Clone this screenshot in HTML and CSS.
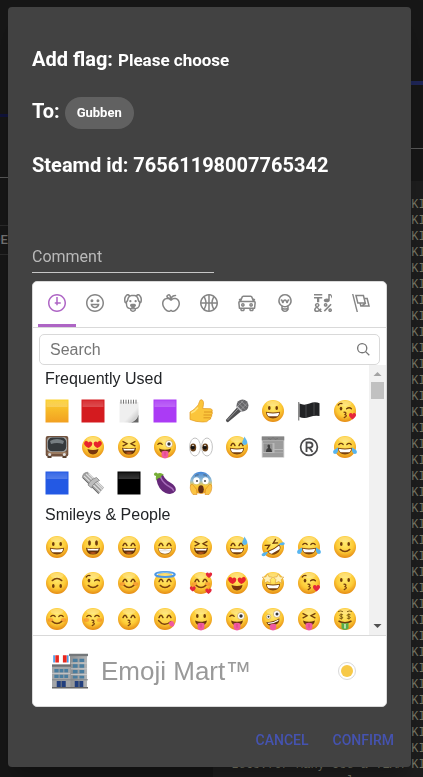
FILE: index.html
```html
<!DOCTYPE html>
<html lang="en">
<head>
<meta charset="utf-8">
<meta name="viewport" content="width=device-width, initial-scale=1">
<title>Add flag</title>
<link rel="stylesheet" href="styles.css">
</head>
<body>
<svg class="defs" aria-hidden="true">
  <defs>
    <radialGradient id="g-face" cx=".5" cy=".36" r=".64"><stop offset="0" stop-color="#ffe96b"/><stop offset=".6" stop-color="#fdcb36"/><stop offset="1" stop-color="#e58b14"/></radialGradient>
    <linearGradient id="g-scream" x1="0" y1="0" x2="0" y2="1"><stop offset="0" stop-color="#3f83d8"/><stop offset=".4" stop-color="#9ac0d0"/><stop offset=".65" stop-color="#fdcb36"/><stop offset="1" stop-color="#ee9e22"/></linearGradient>
    <linearGradient id="g-yellow" x1="0" y1="0" x2="0" y2="1"><stop offset="0" stop-color="#fbd12f"/><stop offset="1" stop-color="#f2a021"/></linearGradient>
    <linearGradient id="g-note" x1="0" y1="0" x2="1" y2="1"><stop offset=".6" stop-color="#efefef"/><stop offset="1" stop-color="#b5b5b5"/></linearGradient>
    <linearGradient id="g-shine" x1="0" y1="0" x2="0" y2="1"><stop offset="0" stop-color="#fff" stop-opacity=".1"/><stop offset="1" stop-color="#fff" stop-opacity=".22"/></linearGradient>
    <linearGradient id="g-wall" x1="0" y1="0" x2="1" y2="0"><stop offset="0" stop-color="#8d8f91"/><stop offset="1" stop-color="#b3b5b6"/></linearGradient>
  </defs>

  <!-- face parts -->
  <symbol id="f" viewBox="0 0 24 24"><circle cx="12" cy="12" r="11" fill="url(#g-face)"/><ellipse cx="12" cy="4.6" rx="6.5" ry="2.8" fill="#fff" opacity=".22"/></symbol>
  <symbol id="e-dot" viewBox="0 0 24 24"><g fill="#6e3b0c"><ellipse cx="8.3" cy="9" rx="1.3" ry="1.9"/><ellipse cx="15.7" cy="9" rx="1.3" ry="1.9"/></g></symbol>
  <symbol id="e-arc" viewBox="0 0 24 24"><path d="M6 10.6Q8 6 10 10.6M14 10.6Q16 6 18 10.6" fill="none" stroke="#6e3b0c" stroke-width="1.4" stroke-linecap="round"/></symbol>
  <symbol id="e-shut" viewBox="0 0 24 24"><path d="M5.8 9.5Q8 7.2 10.2 9.5M13.8 9.5Q16 7.2 18.2 9.5" fill="none" stroke="#6e3b0c" stroke-width="1.2" stroke-linecap="round"/></symbol>
  <symbol id="e-squint" viewBox="0 0 24 24"><path d="M6 6.6l4 2.2-4 2M18 6.6l-4 2.2 4 2" fill="none" stroke="#6e3b0c" stroke-width="1.3" stroke-linecap="round"/></symbol>
  <symbol id="e-wink" viewBox="0 0 24 24"><ellipse cx="8" cy="9.6" rx="1.3" ry="1.9" fill="#6e3b0c"/><path d="M13.6 9.8Q16.3 7.6 18.4 9.8M5.2 6Q6.8 4 9 4.6" fill="none" stroke="#6e3b0c" stroke-width="1.3" stroke-linecap="round"/></symbol>
  <symbol id="e-heart" viewBox="0 0 24 24"><g fill="#e8232c"><path d="M7.6 13C3.3 11.3 2.1 8 4 6.5c1.5-1.1 3 0 3.4 1 .8-1 2.600-1.500 3.600 0 1.100 2-1 4.500-3.400 5.500z"/><path d="M16.400 13c4.300-1.700 5.500-5 3.600-6.500-1.500-1.100-3 0-3.400 1-.8-1-2.600-1.500-3.600 0-1.100 2 1 4.500 3.400 5.500z"/></g></symbol>
  <symbol id="m-teeth" viewBox="0 0 24 24"><path d="M4.800 12.800Q12 14.400 19.200 12.800 18.500 19.400 12 19.400T4.800 12.800z" fill="#7a410e"/><path d="M5.800 13.800Q12 15 18.200 13.800 17.600 17 16.500 17.200H7.500Q6.200 16.600 5.800 13.800z" fill="#fff"/></symbol>
  <symbol id="m-grin" viewBox="0 0 24 24"><path d="M4.800 12.800Q12 14.200 19.200 12.800 18.500 19.600 12 19.600T4.800 12.800z" fill="#a3671c"/><path d="M5.600 13.600Q12 14.900 18.400 13.600 17.600 18.800 12 18.800T5.600 13.600z" fill="#fff"/><path d="M6 15.800h12" stroke="#c9b8a0" stroke-width=".5"/></symbol>
  <symbol id="m-open" viewBox="0 0 24 24"><path d="M5 12.700Q12 14.200 19 12.700 18.500 19.600 12 19.600T5 12.700z" fill="#67340a"/><path d="M6.200 13.500Q12 14.700 17.800 13.500L17 15.500H7z" fill="#fff"/><path d="M8.400 18Q12 15.800 15.600 18 12 20 8.400 18z" fill="#b5541b"/></symbol>
  <symbol id="m-smile" viewBox="0 0 24 24"><path d="M7.200 14.400Q12 18.600 16.800 14.400" fill="none" stroke="#7a410e" stroke-width="1.400" stroke-linecap="round"/></symbol>
  <symbol id="m-kiss" viewBox="0 0 24 24"><path d="M11 13.200q3.400.2 1 2.400 3.200 1.200-.8 3" fill="none" stroke="#7a410e" stroke-width="1.200" stroke-linecap="round"/></symbol>
  <symbol id="m-tongue" viewBox="0 0 24 24"><path d="M6 13.500Q12 16 18 13.500 17.200 18.500 12 18.500T6 13.500z" fill="#67340a"/><path d="M8.600 16.500q3.400-1.600 6.800 0v4.200q-.8 2.800-3.400 2.800t-3.400-2.800z" fill="#f05aa0"/><path d="M12 16.800v4" stroke="#d13b82" stroke-width=".7"/></symbol>
  <symbol id="blush" viewBox="0 0 24 24"><g fill="#f4662a" opacity=".4"><ellipse cx="5.500" cy="13" rx="2.800" ry="1.900"/><ellipse cx="18.500" cy="13" rx="2.800" ry="1.900"/></g></symbol>
  <symbol id="heart" viewBox="0 0 24 24"><path d="M12 21C3 15 1 10 3.500 6 6 3 10.500 4 12 8c1.500-4 6-5 8.500-2C23 10 21 15 12 21z" fill="#e5273b"/></symbol>
  <symbol id="square" viewBox="0 0 24 24"><path d="M.5.500h23v23H.5z"/><path d="M1.500 1.500h21v6.500h-21z" fill="url(#g-shine)"/></symbol>

  <!-- smileys -->
  <symbol id="grinning" viewBox="0 0 24 24"><use href="#f"/><use href="#e-dot"/><use href="#m-teeth"/></symbol>
  <symbol id="smiley" viewBox="0 0 24 24"><use href="#f"/><g fill="#6e3b0c"><ellipse cx="8.500" cy="8" rx="1.400" ry="2.800"/><ellipse cx="15.500" cy="8" rx="1.400" ry="2.800"/></g><use href="#m-open"/></symbol>
  <symbol id="smile" viewBox="0 0 24 24"><use href="#f"/><use href="#e-arc"/><use href="#m-open"/></symbol>
  <symbol id="grin" viewBox="0 0 24 24"><use href="#f"/><use href="#e-arc"/><use href="#m-grin"/></symbol>
  <symbol id="laughing" viewBox="0 0 24 24"><use href="#f"/><use href="#e-squint"/><use href="#m-open"/></symbol>
  <symbol id="sweat" viewBox="0 0 24 24"><use href="#f"/><use href="#e-arc"/><use href="#m-teeth"/><path d="M19.500 1.500c1.200 2.500 3 4.300 2.800 6.300-.3 3-5 3-5.100 0 0-2 1.800-3.800 2.300-6.300z" fill="#5fb8ee"/></symbol>
  <symbol id="joy" viewBox="0 0 24 24"><use href="#f"/><use href="#e-shut"/><use href="#m-teeth"/><g fill="#57b5f0"><path d="M5 12.500c.5 3.500-.5 6.300-2.800 6.500-2.600 0-2.800-3.300-.4-4.500z"/><path d="M19 12.500c-.5 3.500.5 6.300 2.800 6.500 2.600 0 2.800-3.300.4-4.500z"/></g></symbol>
  <symbol id="rofl" viewBox="0 0 24 24"><use href="#f"/><g transform="rotate(-30 12 12)"><use href="#e-squint"/><use href="#m-teeth"/></g><g fill="#57b5f0"><path d="M7 17c-1.500 3.500-4 5-6 3.800-1.500-2 2-3.800 6-3.800z"/><path d="M17.500 9.500c3-2.500 5.500-2.800 6.200-1.200.2 2.200-3.200 2.600-6.200 1.200z"/></g></symbol>
  <symbol id="slight" viewBox="0 0 24 24"><use href="#f"/><use href="#e-dot"/><use href="#m-smile"/></symbol>
  <symbol id="upside" viewBox="0 0 24 24"><use href="#f"/><g transform="rotate(180 12 12)"><use href="#e-dot"/><use href="#m-smile"/></g></symbol>
  <symbol id="wink" viewBox="0 0 24 24"><use href="#f"/><use href="#e-wink"/><use href="#m-smile"/></symbol>
  <symbol id="blushing" viewBox="0 0 24 24"><use href="#f"/><use href="#blush"/><use href="#e-arc"/><use href="#m-smile"/></symbol>
  <symbol id="innocent" viewBox="0 0 24 24"><use href="#f"/><use href="#e-arc"/><use href="#m-smile"/><ellipse cx="12" cy="3.500" rx="9.800" ry="2.500" fill="none" stroke="#4b97e4" stroke-width="2"/><path d="M4 2.600Q12-.2 20 2.600" fill="none" stroke="#9fd0fa" stroke-width=".7"/></symbol>
  <symbol id="loving" viewBox="0 0 24 24"><use href="#f"/><use href="#blush"/><use href="#e-arc"/><use href="#m-smile"/><use href="#heart" x="16" y="0" width="8" height="8"/><use href="#heart" x="0" y="14" width="7.500" height="7.500"/><use href="#heart" x="15.500" y="16" width="8" height="8"/></symbol>
  <symbol id="heart-eyes" viewBox="0 0 24 24"><use href="#f"/><path d="M6.500 14Q12 16 17.500 14 17 19.400 12 19.400T6.500 14z" fill="#7a360c"/><use href="#e-heart"/></symbol>
  <symbol id="star" viewBox="0 0 24 24"><use href="#f"/><use href="#m-teeth"/><g fill="#fff0b5" stroke="#d99b33" stroke-width=".6"><path d="M6.500 2.800l1.500 3 3.500.4-2.400 2.500.6 3.500-3.200-1.600-3.300 1.600.6-3.500L1.200 6.200 5 5.800z"/><path d="M17.500 2.800l1.500 3 3.800.4-2.600 2.500.6 3.500-3.300-1.600-3.200 1.600.6-3.500-2.400-2.500 3.500-.4z"/></g></symbol>
  <symbol id="kiss-heart" viewBox="0 0 24 24"><use href="#f"/><use href="#e-wink"/><use href="#m-kiss"/><use href="#heart" x="15" y="12.500" width="9" height="9"/></symbol>
  <symbol id="kissing" viewBox="0 0 24 24"><use href="#f"/><use href="#e-dot"/><use href="#m-kiss"/></symbol>
  <symbol id="relaxed-face" viewBox="0 0 24 24"><use href="#f"/><use href="#blush"/><use href="#e-shut"/><use href="#m-smile"/></symbol>
  <symbol id="kiss-shut" viewBox="0 0 24 24"><use href="#f"/><use href="#blush"/><use href="#e-shut"/><use href="#m-kiss"/></symbol>
  <symbol id="kiss-arc" viewBox="0 0 24 24"><use href="#f"/><use href="#e-arc"/><use href="#m-kiss"/></symbol>
  <symbol id="yum" viewBox="0 0 24 24"><use href="#f"/><use href="#e-arc"/><path d="M5.500 13.500Q11 20.500 18 14.500" fill="none" stroke="#7a410e" stroke-width="1.400" stroke-linecap="round"/><path d="M15.500 16.300q3-3.600 5-1.300 1.700 3-.4 4.600-2.700.8-4.600-3.300z" fill="#f05aa0"/></symbol>
  <symbol id="tongue" viewBox="0 0 24 24"><use href="#f"/><use href="#e-dot"/><use href="#m-tongue"/></symbol>
  <symbol id="tongue-wink" viewBox="0 0 24 24"><use href="#f"/><path d="M4.800 9.400Q7 7.200 9.200 9.400" fill="none" stroke="#6e3b0c" stroke-width="1.300" stroke-linecap="round"/><circle cx="16" cy="9" r="3.600" fill="#fff" stroke="#b88a3a" stroke-width=".5"/><circle cx="16" cy="9" r="1.700" fill="#333"/><use href="#m-tongue"/></symbol>
  <symbol id="zany" viewBox="0 0 24 24"><use href="#f"/><circle cx="7.500" cy="9.800" r="2.300" fill="#fff" stroke="#b88a3a" stroke-width=".5"/><circle cx="7.500" cy="9.800" r="1" fill="#333"/><circle cx="15.800" cy="7" r="3.500" fill="#fff" stroke="#b88a3a" stroke-width=".5"/><circle cx="16" cy="7" r="1.500" fill="#333"/><g transform="rotate(-14 12 15)"><path d="M5.500 13.500Q12 15.500 19 13 18.500 18.500 12 18.500T5.500 13.500z" fill="#67340a"/><path d="M6.500 14.300Q12 16 18 13.900l-.6 1.500Q12 17 7 15.800z" fill="#fff"/></g><path d="M8.800 18q3.300-2 6.400-.5v3.500q-.8 2.500-3.200 2.500T8.800 21z" fill="#f05aa0"/></symbol>
  <symbol id="tongue-shut" viewBox="0 0 24 24"><use href="#f"/><use href="#e-squint"/><use href="#m-tongue"/></symbol>
  <symbol id="money" viewBox="0 0 24 24"><use href="#f"/><path d="M5 4.700q2.500-1.500 5 0M14 4.700q2.500-1.500 5 0M10 7.800q-3.400-1.300-3.400.4 0 1 1.700 1.300t1.500 1.500q-.5 1.200-3.400.2M8.300 6.500v6M17.500 7.800q-3.400-1.300-3.400.4 0 1 1.700 1.300t1.500 1.500q-.5 1.200-3.400.2M15.800 6.500v6" fill="none" stroke="#7a5a12" stroke-width=".9"/><path d="M5.500 14Q12 17.500 18.500 14" fill="none" stroke="#6e3b0c" stroke-width="1.500"/><path d="M8.500 15.800q3.500 1.200 7 0v5.800q-3.500 2.600-7 0z" fill="#58ad4a"/><path d="M12 17v4.500" stroke="#d3efc4" stroke-width="1.500"/></symbol>
  <symbol id="scream" viewBox="0 0 24 24"><circle cx="12" cy="11.800" r="11" fill="url(#g-scream)"/><path d="M6 5.200q1.500-1.700 3.600-1.300M18 5.200q-1.500-1.700-3.600-1.300" fill="none" stroke="#4b5d70" stroke-width=".9"/><ellipse cx="7.500" cy="9.700" rx="3.200" ry="3.500" fill="#fff"/><ellipse cx="16.500" cy="9.700" rx="3.200" ry="3.500" fill="#fff"/><circle cx="8" cy="10" r="1" fill="#444"/><circle cx="16" cy="10" r="1" fill="#444"/><ellipse cx="12" cy="18.300" rx="2.800" ry="4" fill="#633016"/><path d="M1.500 14q1.800-1.700 3 .5l3 4 .5 5H4Q.5 20 1.500 14zM22.500 14q-1.800-1.700-3 .5l-3 4-.5 5h4q3.500-3.500 2.500-9.500z" fill="#fbc443" stroke="#d98a1e" stroke-width=".6"/></symbol>

  <!-- objects -->
  <symbol id="notepad" viewBox="0 0 24 24"><path d="M2.500 3h19v14l-5 6.500h-14z" fill="url(#g-note)"/><path d="M14 23.500q5-1.500 7.500-7.500v7.500z" fill="#666"/><path d="M11 23.500q5-2 6-5 2.500.5 4.500-2.500-2 5.500-7.500 7.500z" fill="#d3d3d3"/><path d="M4 .7v4M6.500.7v4M9 .7v4M11.500.7v4M14 .7v4M16.500.7v4M19 .7v4" stroke="#777" stroke-width="1"/></symbol>
  <symbol id="thumb" viewBox="0 0 24 24"><path d="M1 13q3-1.500 5.500-4Q10 6 10.500 2.500 11 .3 12.800.8q2.700 1 1.200 7.200l-.3 1.500 7.800.2q2.500.5 1.600 3 .8 1.700-.4 3 .4 1.800-.8 2.700.2 2-2 2.400-1.500 2.700-6.400 2.200Q7 23 1 20.500z" fill="#fbc53b" stroke="#e29a21" stroke-width=".7"/><path d="M15 13h8M14.500 16h8M14.500 18.800h7" stroke="#d68c1c" stroke-width=".8"/><path d="M2 14q4-1.500 7-5.500" stroke="#ffe37b" stroke-width="1.500" fill="none"/></symbol>
  <symbol id="mic" viewBox="0 0 24 24"><path d="M.8 21L12.500 8l4 4L3 23.300q-1.500.4-2.200-2.300z" fill="#505052"/><path d="M2.500 21L13 10" stroke="#98989a" stroke-width="1"/><circle cx="17.500" cy="6.500" r="6" fill="#67676a"/><path d="M13.500 4l6.500 6.500M16 1.800l6 6M12.500 7.500L18.500 1.500M15.500 11l7-7" stroke="#a5a5a8" stroke-width=".7"/><path d="M11.500 7l5.500 5.500" stroke="#bababd" stroke-width="1.600"/></symbol>
  <symbol id="flag" viewBox="0 0 24 24"><path d="M1.700 3v18.500" stroke="#888" stroke-width="1.300"/><path d="M2.500 4.500Q7 6.800 12.500 4.500T22.500 4.300V17q-4.500-1-10 1t-10 0z" fill="#222325"/><path d="M9 6v12M17 4v12.500" stroke="#4b4c4e" stroke-width="1"/></symbol>
  <symbol id="tv" viewBox="0 0 24 24"><rect x=".7" y="1" width="22.600" height="20.500" rx="2" fill="#73533f"/><rect x="2" y="2" width="20" height="15" rx="4" fill="#a3a3a1"/><rect x="2.800" y="2.600" width="18.400" height="13.600" rx="4.500" fill="#35393c"/><path d="M5 6q7-3.800 14 0l-1 3q-6-2-12 0z" fill="#767d81"/><path d="M2.500 18h19" stroke="#a9896d" stroke-width="1.500"/><circle cx="4.700" cy="19.500" r="1.500" fill="#ddd"/><circle cx="19.300" cy="19.500" r="1.500" fill="#ddd"/><path d="M2.500 21h4v2h-4zM17.500 21h4v2h-4z" fill="#57402f"/></symbol>
  <symbol id="eyes" viewBox="0 0 24 24"><g fill="#fff" stroke="#b4b4b4" stroke-width=".8"><ellipse cx="6" cy="12" rx="5.400" ry="9"/><ellipse cx="18" cy="12" rx="5.400" ry="9"/></g><ellipse cx="4.200" cy="12.500" rx="3" ry="4" fill="#674019"/><ellipse cx="16.200" cy="12.500" rx="3" ry="4" fill="#674019"/><circle cx="3.800" cy="12.500" r="2" fill="#111"/><circle cx="15.800" cy="12.500" r="2" fill="#111"/><circle cx="4" cy="10.500" r=".8" fill="#fff"/><circle cx="16" cy="10.500" r=".8" fill="#fff"/></symbol>
  <symbol id="news" viewBox="0 0 24 24"><path d="M.8 1.500h22.400v21H.8z" fill="#b9b9b9"/><path d="M.8 1.500h22.400v3.800H.8z" fill="#858585"/><path d="M7 3.400l3 1 2-2 2 2 3-1M2 7h20M13.500 9h8.500M13.500 11h8.500M13.500 13h8.500M2 19h20M2 21h20" stroke="#707070" stroke-width=".8" fill="none"/><path d="M2.500 8.500h9V17h-9z" fill="#919191"/><path d="M5 17q0-3.500 2.200-4Q5.500 10 7.500 9.500T9 13q2 .8 2 4z" fill="#3e3e3e"/><path d="M13.500 15h8.500v2.500h-8.500z" fill="#999"/></symbol>
  <symbol id="registered" viewBox="0 0 24 24"><circle cx="12" cy="12" r="8.400" fill="none" stroke="#4a4a4c" stroke-width="1.700"/><path d="M9.500 17V7.500h3.200q2.800.2 2.800 2.600t-2.800 2.600H9.500M12.500 12.700l3 4.300" fill="none" stroke="#4a4a4c" stroke-width="1.800"/></symbol>
  <symbol id="rolled" viewBox="0 0 24 24"><path d="M.8 6.500Q1.500 1.500 6.500.8L23 16.500l-5.500 6.700z" fill="#9c9c9c"/><path d="M3 5l16.500 16M5 3l16 15.500M7.500 2.500L22 17" stroke="#dedede" stroke-width="1.300"/><path d="M2 7l15.500 15.500" stroke="#6f6f6f" stroke-width="1"/><path d="M7 14q2-5.500 8.500-7.500l3 3Q12 12 10.500 17z" fill="#bdbdbd" stroke="#777" stroke-width=".7"/></symbol>
  <symbol id="eggplant" viewBox="0 0 24 24"><path d="M3 5Q6 1 10 4q2 5 8 8 6 4 4.500 8-3 4.500-10 2Q4 18 3 5z" fill="#66287a"/><path d="M7.500 5.500q1.500 6 9.500 10.500 3 1.500 3.500 3.500" fill="none" stroke="#a56bb8" stroke-width="1.500" stroke-linecap="round"/><path d="M.8 3Q3 .3 4.500 2.500 8 .8 11 4 8 4 7.500 7 5.500 6 3 9.500 2.500 7 3 5 1 5 .8 3z" fill="#77ae37"/></symbol>
  <symbol id="store" viewBox="0 0 38 38"><path d="M19 2h18v35H19z" fill="url(#g-wall)"/><path d="M18 .8h20v2.500H18z" fill="#74787b"/><path d="M0 13h19.500v24H0z" fill="#a4a6a8"/><path d="M0 12h20v2.500H0z" fill="#6c7073"/><path d="M2.500 17H7v3.500H2.500zM8 17h4v3.500H8zM13 17h4v3.500h-4zM2.500 23H7v3.500H2.500zM8 23h4v3.500H8zM13 23h4v3.500h-4zM22 6h5v3.500h-5zM29 6h5v3.500h-5zM22 12h5v3.500h-5zM29 12h5v3.500h-5zM22 18h5v3.500h-5zM29 18h5v3.500h-5zM22 24h5v3h-5zM29 24h5v3h-5z" fill="#4a7d9f"/><path d="M0 21.500h19M20 10.700h17M20 16.700h17M20 22.700h17" stroke="#d0d1d2" stroke-width=".8"/><path d="M5 29.500h9.500V37H5zM24 29.500h9V37h-9z" fill="#223f7e"/><path d="M9.700 29.500V37M28.500 29.500V37M0 28.300h38" stroke="#808386" stroke-width="1"/><path d="M0 36h38v1.500H0z" fill="#666"/><path d="M1.300 2.500h5.500V10H1.300zM11.500 2.500H17V10h-5.500z" fill="#fff"/><path d="M1.300 2.500h1.800V10H1.300zM15.700 2.500h1.800V10h-1.800z" fill="#4b9be6"/><path d="M3.500 2.500h3.800V10H3.500zM11.500 2.500h4V10h-4z" fill="#e8281f"/></symbol>
</svg>

<main class="page" aria-hidden="true">
  <div class="page-left">
    <div class="bar"></div>
    <div class="rule"></div>
    <div class="tab">DE</div>
  </div>
  <div class="page-right">
    <div class="bar-right"></div>
    <div class="rule-right"></div>
    <pre class="log">                          KI
                          KI
                          KI
                          KI
                          KI
                          KI
                          KI
                          KI
                          KI
                          KI
                          KI
                          KI
                          KI
                          KI
                          KI
                          KI
                          KI
                          KI
                          KI
                          KI
                          KI
                          KI
                          KI
                          KI
                          KI
                          KI
                          KI
                          KI
                          KI
                          KI
                          KI
                          KI
                          KI
                          KI
                          KI
 Lets.for Many Use a TEAM KI
                 l</pre>
  </div>
</main>

<div class="overlay">
<form class="dialog" role="dialog" aria-label="Add flag">
  <div class="content">
    <h2 class="title">Add flag: <span class="choice">Please choose</span></h2>
    <h2 class="title to">To: <span class="chip">Gubben</span></h2>
    <h2 class="title steam">Steamd id: 76561198007765342</h2>
    <input class="comment" type="text" placeholder="Comment" aria-label="Comment">

    <section class="picker" aria-label="Emoji Mart™">
      <nav class="anchors">
        <button type="button" class="anchor active" aria-label="Frequently Used"><svg viewBox="0 0 24 24"><path d="M13 4h-2l-.001 7H9v2h2v2h2v-2h4v-2h-4z"/><path d="M12 0C5.373 0 0 5.373 0 12s5.373 12 12 12 12-5.373 12-12S18.627 0 12 0m0 22C6.486 22 2 17.514 2 12S6.486 2 12 2s10 4.486 10 10-4.486 10-10 10"/></svg></button>
        <button type="button" class="anchor" aria-label="Smileys &amp; People"><svg viewBox="0 0 24 24"><path d="M12 0C5.373 0 0 5.373 0 12s5.373 12 12 12 12-5.373 12-12S18.627 0 12 0m0 22C6.486 22 2 17.514 2 12S6.486 2 12 2s10 4.486 10 10-4.486 10-10 10"/><path d="M8 7a2 2 0 1 0-.001 3.999A2 2 0 0 0 8 7M16 7a2 2 0 1 0-.001 3.999A2 2 0 0 0 16 7M15.232 15c-.693 1.195-1.870 2-3.349 2-1.477 0-2.655-.805-3.347-2H15m3-2H6a6 6 0 1 0 12 0"/></svg></button>
        <button type="button" class="anchor" aria-label="Animals &amp; Nature"><svg viewBox="0 0 24 24"><path d="M15.500 8a1.500 1.500 0 1 0 .001 3.001A1.500 1.500 0 0 0 15.500 8M8.500 8a1.500 1.500 0 1 0 .001 3.001A1.500 1.500 0 0 0 8.500 8"/><path d="M18.933 0h-.027c-.97 0-2.138.787-3.018 1.497-1.274-.374-2.612-.51-3.887-.51-1.285 0-2.616.133-3.874.517C7.245.79 6.069 0 5.093 0h-.027C3.352 0 .07 2.670.002 7.026c-.039 2.479.276 4.238 1.040 5.013.254.258.882.677 1.295.882.191 3.177.922 5.238 2.536 6.380.897.637 2.187.949 3.200 1.102C8.040 20.600 8 20.795 8 21c0 1.773 2.350 3 4 3 1.648 0 4-1.227 4-3 0-.201-.038-.393-.072-.586 2.573-.385 5.435-1.877 5.925-7.587.396-.22.887-.568 1.104-.788.763-.774 1.079-2.534 1.040-5.013C23.929 2.670 20.646 0 18.933 0M3.223 9.135c-.237.281-.837 1.155-.884 1.238-.15-.41-.368-1.349-.337-3.291.051-3.281 2.478-4.972 3.091-5.031.256.015.731.270 1.265.646-1.110 1.171-2.275 2.915-2.352 5.125-.133.546-.398.858-.783 1.313M12 22c-.901 0-1.954-.693-2-1 0-.654.475-1.236 1-1.602V20a1 1 0 1 0 2 0v-.602c.524.365 1 .947 1 1.602-.046.307-1.099 1-2 1m3-3.480v.02a4.752 4.752 0 0 0-1.262-1.020c1.092-.516 2.239-1.334 2.239-2.217 0-1.842-1.781-2.195-3.977-2.195-2.196 0-3.978.354-3.978 2.195 0 .883 1.148 1.701 2.238 2.217A4.800 4.800 0 0 0 9 18.539v-.025c-1-.076-2.182-.281-2.973-.842-1.301-.92-1.838-3.045-1.853-6.478l.023-.041c.496-.826 1.490-1.450 1.804-3.102 0-2.047 1.357-3.631 2.362-4.522C9.370 3.178 10.555 3 11.948 3c1.447 0 2.685.192 3.733.57 1 .9 2.316 2.465 2.316 4.480.313 1.651 1.307 2.275 1.803 3.102.035.058.068.117.102.178-.059 5.967-1.949 7.010-4.902 7.190m6.628-8.202c-.037-.065-.074-.13-.113-.195a7.587 7.587 0 0 0-.739-.987c-.385-.455-.648-.768-.782-1.313-.076-2.209-1.241-3.954-2.353-5.124.531-.376 1.004-.63 1.261-.647.636.071 3.044 1.764 3.096 5.031.027 1.810-.347 3.218-.37 3.235"/></svg></button>
        <button type="button" class="anchor" aria-label="Food &amp; Drink"><svg viewBox="0 0 24 24"><path d="M17 4.978c-1.838 0-2.876.396-3.680.934.513-1.172 1.768-2.934 4.680-2.934a1 1 0 0 0 0-2c-2.921 0-4.629 1.365-5.547 2.512-.064.078-.119.162-.18.244C11.730 1.838 10.798.023 9.207.023 8.579.022 7.850.306 7 .978 5.027 2.540 5.329 3.902 6.492 4.999 3.609 5.222 0 7.352 0 12.969c0 4.582 4.961 11.009 9 11.009 1.975 0 2.371-.486 3-1 .629.514 1.025 1 3 1 4.039 0 9-6.418 9-11 0-5.953-4.055-8-7-8M8.242 2.546c.641-.508.943-.523.965-.523.426.169.975 1.405 1.357 3.055-1.527-.629-2.741-1.352-2.980-1.846.059-.112.241-.356.658-.686M15 21.978c-1.080 0-1.210-.109-1.559-.402l-.176-.146c-.367-.302-.816-.452-1.266-.452s-.898.15-1.266.452l-.176.146c-.347.292-.477.402-1.557.402-2.813 0-7-5.389-7-9.009 0-5.823 4.488-5.991 5-5.991 1.939 0 2.484.471 3.387 1.251l.323.276a1.995 1.995 0 0 0 2.580 0l.323-.276c.902-.78 1.447-1.251 3.387-1.251.512 0 5 .168 5 6 0 3.617-4.187 9-7 9"/></svg></button>
        <button type="button" class="anchor" aria-label="Activity"><svg viewBox="0 0 24 24"><path d="M12 0C5.373 0 0 5.373 0 12c0 6.628 5.373 12 12 12 6.628 0 12-5.372 12-12 0-6.627-5.372-12-12-12m9.949 11H17.050c.224-2.527 1.232-4.773 1.968-6.113A9.966 9.966 0 0 1 21.949 11M13 11V2.051a9.945 9.945 0 0 1 4.432 1.564c-.858 1.491-2.156 4.220-2.392 7.385H13zm-2 0H8.961c-.238-3.165-1.536-5.894-2.393-7.385A9.950 9.950 0 0 1 11 2.051V11zm0 2v8.949a9.937 9.937 0 0 1-4.432-1.564c.857-1.492 2.155-4.221 2.393-7.385H11zm4.040 0c.236 3.164 1.534 5.893 2.392 7.385A9.920 9.920 0 0 1 13 21.949V13h2.040zM4.982 4.887C5.718 6.227 6.726 8.473 6.951 11h-4.900a9.977 9.977 0 0 1 2.931-6.113M2.051 13h4.900c-.226 2.527-1.233 4.771-1.969 6.113A9.972 9.972 0 0 1 2.051 13m16.967 6.113c-.735-1.342-1.744-3.586-1.968-6.113h4.899a9.961 9.961 0 0 1-2.931 6.113"/></svg></button>
        <button type="button" class="anchor" aria-label="Travel &amp; Places"><svg viewBox="0 0 24 24"><path d="M6.500 12C5.122 12 4 13.121 4 14.500S5.122 17 6.500 17 9 15.879 9 14.500 7.878 12 6.500 12m0 3c-.275 0-.5-.225-.5-.5s.225-.5.5-.5.5.225.5.5-.225.5-.5.5M17.500 12c-1.378 0-2.500 1.121-2.500 2.500s1.122 2.500 2.500 2.500 2.500-1.121 2.500-2.500-1.122-2.500-2.500-2.500m0 3c-.275 0-.5-.225-.5-.5s.225-.5.5-.5.5.225.5.5-.225.5-.5.5"/><path d="M22.482 9.494l-1.039-.346L21.400 9h.6c.552 0 1-.439 1-.992 0-.006-.003-.008-.003-.008H23c0-1-.889-2-1.984-2h-.642l-.731-1.717C19.262 3.012 18.091 2 16.764 2H7.236C5.909 2 4.738 3.012 4.357 4.283L3.626 6h-.642C1.889 6 1 7 1 8h.003S1 8.002 1 8.008C1 8.561 1.448 9 2 9h.6l-.043.148-1.039.346a2.001 2.001 0 0 0-1.359 2.097l.751 7.508a1 1 0 0 0 .994.901H3v1c0 1.103.896 2 2 2h2c1.104 0 2-.897 2-2v-1h6v1c0 1.103.896 2 2 2h2c1.104 0 2-.897 2-2v-1h1.096a.999.999 0 0 0 .994-.901l.751-7.508a2.001 2.001 0 0 0-1.359-2.097M6.273 4.857C6.402 4.430 6.788 4 7.236 4h9.527c.448 0 .834.43.963.857L19.313 9H4.688l1.585-4.143zM7 21H5v-1h2v1zm12 0h-2v-1h2v1zm2.189-3H2.811l-.662-6.607L3 11h18l.852.393L21.189 18z"/></svg></button>
        <button type="button" class="anchor" aria-label="Objects"><svg viewBox="0 0 24 24"><path d="M12 0a9 9 0 0 0-5 16.482V21s2.035 3 5 3 5-3 5-3v-4.518A9 9 0 0 0 12 0zm0 2c3.860 0 7 3.141 7 7s-3.140 7-7 7-7-3.141-7-7 3.140-7 7-7zM9 17.477c.94.332 1.946.523 3 .523s2.060-.19 3-.523v.834c-.91.436-1.925.689-3 .689a6.924 6.924 0 0 1-3-.69v-.833zm.236 3.070A8.854 8.854 0 0 0 12 21c.965 0 1.888-.167 2.758-.451C14.155 21.173 13.153 22 12 22c-1.102 0-2.117-.789-2.764-1.453z"/><path d="M14.745 12.449h-.004c-.852-.024-1.188-.858-1.577-1.824-.421-1.061-.703-1.561-1.182-1.566h-.009c-.481 0-.783.497-1.235 1.537-.436.982-.801 1.811-1.636 1.791l-.276-.043c-.565-.171-.853-.691-1.284-1.794-.125-.313-.202-.632-.27-.913-.051-.213-.127-.53-.195-.634C7.067 9.004 7.039 9 6.990 9A1 1 0 0 1 7 7h.010c1.662.017 2.015 1.373 2.198 2.134.486-.981 1.304-2.058 2.797-2.075 1.531.018 2.280 1.153 2.731 2.141l.002-.008C14.944 8.424 15.327 7 16.979 7h.032A1 1 0 1 1 17 9h-.011c-.149.076-.256.474-.319.709a6.484 6.484 0 0 1-.311.951c-.429.973-.79 1.789-1.614 1.789"/></svg></button>
        <button type="button" class="anchor" aria-label="Symbols"><svg viewBox="0 0 24 24"><path d="M0 0h11v2H0zM4 11h3V6h4V4H0v2h4zM15.500 17c1.381 0 2.500-1.116 2.500-2.493s-1.119-2.493-2.500-2.493S13 13.130 13 14.507 14.119 17 15.500 17m0-2.986c.276 0 .5.222.5.493 0 .272-.224.493-.5.493s-.5-.221-.5-.493.224-.493.5-.493M21.500 19.014c-1.381 0-2.500 1.116-2.500 2.493S20.119 24 21.500 24s2.500-1.116 2.500-2.493-1.119-2.493-2.500-2.493m0 2.986a.497.497 0 0 1-.5-.493c0-.271.224-.493.5-.493s.5.222.5.493a.497.497 0 0 1-.5.493M22 13l-9 9 1.513 1.500 8.990-9.009zM17 11c2.209 0 4-1.119 4-2.500V2s.985-.161 1.498.949C23.010 4.055 23 6 23 6s1-1.119 1-3.135C24-.02 21 0 21 0h-2v6.347A5.853 5.853 0 0 0 17 6c-2.209 0-4 1.119-4 2.500s1.791 2.500 4 2.500M10.297 20.482l-1.475-1.585a47.540 47.540 0 0 1-1.442 1.129c-.307-.288-.989-1.016-2.045-2.183.902-.836 1.479-1.466 1.729-1.892s.376-.871.376-1.336c0-.592-.273-1.178-.818-1.759-.546-.581-1.329-.871-2.349-.871-1.008 0-1.790.293-2.344.879-.556.587-.832 1.181-.832 1.784 0 .813.419 1.748 1.256 2.805-.847.614-1.444 1.208-1.794 1.784a3.465 3.465 0 0 0-.523 1.833c0 .857.308 1.560.924 2.107.616.549 1.423.823 2.420.823 1.173 0 2.444-.379 3.813-1.137L8.235 24h2.819l-2.090-2.383 1.333-1.135zm-6.736-6.389a1.020 1.020 0 0 1 .73-.286c.31 0 .559.085.747.254a.849.849 0 0 1 .283.659c0 .518-.419 1.112-1.257 1.784-.536-.651-.805-1.231-.805-1.742a.901.901 0 0 1 .302-.669M3.740 22c-.427 0-.778-.116-1.057-.349-.279-.232-.418-.487-.418-.766 0-.594.509-1.288 1.527-2.083.968 1.134 1.717 1.946 2.248 2.438-.921.507-1.686.760-2.300.760"/></svg></button>
        <button type="button" class="anchor" aria-label="Flags"><svg viewBox="0 0 24 24"><path d="M0 0l6.084 24H8L1.916 0zM21 5h-4l-1-4H4l3 12h3l1 4h13L21 5zM6.563 3h7.875l2 8H8.563l-2-8zm8.832 10l-2.856 1.904L12.063 13h3.332zM19 13l-1.500-6h1.938l2 8H16l3-2z"/></svg></button>
      </nav>

      <div class="search">
        <input class="search-input" type="search" placeholder="Search" aria-label="Search">
        <button type="button" class="search-button" aria-label="Search"><svg viewBox="0 0 20 20"><path d="M12.900 14.320a8 8 0 1 1 1.410-1.410l5.350 5.330-1.420 1.420-5.330-5.340zM8 14A6 6 0 1 0 8 2a6 6 0 0 0 0 12z"/></svg></button>
      </div>

      <div class="scroll">
        <div class="list">
          <h3 class="label">Frequently Used</h3>
          <div class="grid">
            <button type="button" class="emoji" aria-label="yellow square"><svg fill="url(#g-yellow)"><use href="#square"/></svg></button>
            <button type="button" class="emoji" aria-label="red square"><svg class="red"><use href="#square"/></svg></button>
            <button type="button" class="emoji" aria-label="notepad"><svg><use href="#notepad"/></svg></button>
            <button type="button" class="emoji" aria-label="purple square"><svg class="purple"><use href="#square"/></svg></button>
            <button type="button" class="emoji" aria-label="thumbs up"><svg><use href="#thumb"/></svg></button>
            <button type="button" class="emoji" aria-label="microphone"><svg><use href="#mic"/></svg></button>
            <button type="button" class="emoji" aria-label="grinning"><svg><use href="#grinning"/></svg></button>
            <button type="button" class="emoji" aria-label="black flag"><svg><use href="#flag"/></svg></button>
            <button type="button" class="emoji" aria-label="kissing heart"><svg><use href="#kiss-heart"/></svg></button>
            <button type="button" class="emoji" aria-label="television"><svg><use href="#tv"/></svg></button>
            <button type="button" class="emoji" aria-label="heart eyes"><svg><use href="#heart-eyes"/></svg></button>
            <button type="button" class="emoji" aria-label="laughing"><svg><use href="#laughing"/></svg></button>
            <button type="button" class="emoji" aria-label="winking with tongue"><svg><use href="#tongue-wink"/></svg></button>
            <button type="button" class="emoji" aria-label="eyes"><svg><use href="#eyes"/></svg></button>
            <button type="button" class="emoji" aria-label="sweat smile"><svg><use href="#sweat"/></svg></button>
            <button type="button" class="emoji" aria-label="newspaper"><svg><use href="#news"/></svg></button>
            <button type="button" class="emoji" aria-label="registered"><svg><use href="#registered"/></svg></button>
            <button type="button" class="emoji" aria-label="joy"><svg><use href="#joy"/></svg></button>
            <button type="button" class="emoji" aria-label="blue square"><svg class="blue"><use href="#square"/></svg></button>
            <button type="button" class="emoji" aria-label="rolled newspaper"><svg><use href="#rolled"/></svg></button>
            <button type="button" class="emoji" aria-label="black square"><svg class="black"><use href="#square"/></svg></button>
            <button type="button" class="emoji" aria-label="eggplant"><svg><use href="#eggplant"/></svg></button>
            <button type="button" class="emoji" aria-label="scream"><svg><use href="#scream"/></svg></button>
          </div>
          <h3 class="label">Smileys &amp; People</h3>
          <div class="grid">
            <button type="button" class="emoji" aria-label="grinning"><svg><use href="#grinning"/></svg></button>
            <button type="button" class="emoji" aria-label="smiley"><svg><use href="#smiley"/></svg></button>
            <button type="button" class="emoji" aria-label="smile"><svg><use href="#smile"/></svg></button>
            <button type="button" class="emoji" aria-label="grin"><svg><use href="#grin"/></svg></button>
            <button type="button" class="emoji" aria-label="laughing"><svg><use href="#laughing"/></svg></button>
            <button type="button" class="emoji" aria-label="sweat smile"><svg><use href="#sweat"/></svg></button>
            <button type="button" class="emoji" aria-label="rolling on the floor"><svg><use href="#rofl"/></svg></button>
            <button type="button" class="emoji" aria-label="joy"><svg><use href="#joy"/></svg></button>
            <button type="button" class="emoji" aria-label="slight smile"><svg><use href="#slight"/></svg></button>
            <button type="button" class="emoji" aria-label="upside down"><svg><use href="#upside"/></svg></button>
            <button type="button" class="emoji" aria-label="wink"><svg><use href="#wink"/></svg></button>
            <button type="button" class="emoji" aria-label="blush"><svg><use href="#blushing"/></svg></button>
            <button type="button" class="emoji" aria-label="innocent"><svg><use href="#innocent"/></svg></button>
            <button type="button" class="emoji" aria-label="smiling with hearts"><svg><use href="#loving"/></svg></button>
            <button type="button" class="emoji" aria-label="heart eyes"><svg><use href="#heart-eyes"/></svg></button>
            <button type="button" class="emoji" aria-label="star struck"><svg><use href="#star"/></svg></button>
            <button type="button" class="emoji" aria-label="kissing heart"><svg><use href="#kiss-heart"/></svg></button>
            <button type="button" class="emoji" aria-label="kissing"><svg><use href="#kissing"/></svg></button>
            <button type="button" class="emoji" aria-label="relaxed"><svg><use href="#relaxed-face"/></svg></button>
            <button type="button" class="emoji" aria-label="kissing with closed eyes"><svg><use href="#kiss-shut"/></svg></button>
            <button type="button" class="emoji" aria-label="kissing with smiling eyes"><svg><use href="#kiss-arc"/></svg></button>
            <button type="button" class="emoji" aria-label="yum"><svg><use href="#yum"/></svg></button>
            <button type="button" class="emoji" aria-label="tongue out"><svg><use href="#tongue"/></svg></button>
            <button type="button" class="emoji" aria-label="winking with tongue"><svg><use href="#tongue-wink"/></svg></button>
            <button type="button" class="emoji" aria-label="zany"><svg><use href="#zany"/></svg></button>
            <button type="button" class="emoji" aria-label="squinting with tongue"><svg><use href="#tongue-shut"/></svg></button>
            <button type="button" class="emoji" aria-label="money mouth"><svg><use href="#money"/></svg></button>
          </div>
        </div>
        <div class="scrollbar" aria-hidden="true">
          <svg class="arrow" viewBox="0 0 17 17"><path d="M4.500 11h8L8.500 7z" fill="#a3a3a3"/></svg>
          <span class="thumb"></span>
          <svg class="arrow down" viewBox="0 0 17 17"><path d="M4.500 6h8l-4 4z" fill="#505050"/></svg>
        </div>
      </div>

      <footer class="preview">
        <svg class="store" aria-hidden="true"><use href="#store"/></svg>
        <span class="brand">Emoji Mart™</span>
        <button type="button" class="skin" aria-label="Skin tone"><span class="tone"></span></button>
      </footer>
    </section>
  </div>
  <div class="actions">
    <button type="button" class="action">CANCEL</button>
    <button type="submit" class="action">CONFIRM</button>
  </div>
</form>
</div>
</body>
</html>
```
FILE: styles.css
```css
* { box-sizing: border-box; }

body {
  margin: 0;
  background: #171717;
  font-family: Roboto, sans-serif;
  color: #fff;
}

button {
  margin: 0;
  padding: 0;
  border: 0;
  background: none;
  font: inherit;
  cursor: pointer;
}

.defs { position: absolute; width: 0; height: 0; }

/* page behind the dialog */
.page {
  display: grid;
  grid-template-columns: 213px 1fr;
  height: 100vh;
  overflow: hidden;
}

.page-left { padding-top: 114px; }
.bar { height: 3px; background: #11143c; }
.rule { height: 61px; border-bottom: 1px solid #5a5a5a; }
.tab {
  height: 30px;
  margin-top: 47px;
  border: solid #2c2c2c;
  border-width: 1px 0;
  font-size: 13px;
  font-weight: 500;
  line-height: 28px;
  color: #777;
  text-indent: -8px;
}

.page-right { padding-top: 81px; overflow: hidden; }
.bar-right { height: 4px; background: #1f2659; }
.rule-right { height: 64px; border-bottom: 1px solid #5a5a5a; }
.log {
  height: 100%;
  margin: 32px 0 0;
  padding: 16px 0 0 11px;
  background: #1e1e1e;
  font: 12px/16px "Liberation Mono", monospace;
  color: #7a7a68;
}

/* dialog */
.overlay {
  position: fixed;
  inset: 0;
  padding: 7px 12px 10px 8px;
}

.dialog {
  border-radius: 4px;
  background: #424242;
  box-shadow: 0 11px 15px -7px rgba(0, 0, 0, .2), 0 24px 38px 3px rgba(0, 0, 0, .14);
}

.content { padding: 36px 24px 0; }

.title {
  margin: 0;
  font-size: 20px;
  font-weight: 700;
  line-height: 32px;
}
.choice { font-size: 17px; }
.to { display: flex; gap: 5px; margin-top: 19px; }
.steam { margin-top: 20px; }

.chip {
  height: 32px;
  margin-top: 2px;
  padding: 0 12px;
  border-radius: 16px;
  background: #616161;
  font-size: 13px;
}

.comment {
  display: block;
  width: 182px;
  height: 32px;
  margin-top: 60px;
  padding: 0;
  border: 0;
  border-bottom: 1px solid #c6c6c6;
  outline: 0;
  background: none;
  font: 16px Roboto, sans-serif;
  color: #fff;
}
.comment::placeholder { color: #b9b9b9; opacity: 1; }

/* emoji picker */
.picker {
  display: flex;
  flex-direction: column;
  margin-top: 8px;
  border: 1px solid #d9d9d9;
  border-radius: 5px;
  background: #fff;
  font-family: "Liberation Sans", Arial, sans-serif;
  color: #222427;
}

.anchors {
  display: flex;
  padding: 0 6px 0 5px;
  border-bottom: 1px solid #d9d9d9;
}
.anchor {
  flex: 1;
  height: 45px;
  border-bottom: 3px solid transparent;
  color: #858585;
}
.anchor.active { border-color: #ae65c5; color: #ae65c5; }
.anchor svg {
  display: block;
  width: 18px;
  height: 18px;
  margin: 0 auto;
  fill: currentColor;
}

.search {
  display: flex;
  align-items: center;
  height: 31px;
  margin: 6px 6px 0;
  padding: 0 9px 0 10px;
  border: 1px solid #d9d9d9;
  border-radius: 5px;
}
.search-input {
  flex: 1;
  min-width: 0;
  padding: 0;
  border: 0;
  outline: 0;
  background: none;
  font: 16px "Liberation Sans", Arial, sans-serif;
}
.search-input::placeholder { color: #757575; opacity: 1; }
.search-button svg { display: block; width: 13px; height: 13px; fill: #777; }

.scroll { display: flex; height: 270px; overflow: hidden; }
.list { flex: 1; padding: 0 6px; }
.label {
  margin: 0;
  padding: 0 6px;
  font-size: 16px;
  font-weight: 400;
  line-height: 28px;
}
.grid { display: grid; grid-template-columns: repeat(9, 1fr); }
.emoji { height: 36px; }
.emoji svg { display: block; width: 24px; height: 24px; margin: 0 auto; }
.red { fill: #d41b1f; }
.purple { fill: #ab3bf5; }
.blue { fill: #2359e4; }
.black { fill: #000; }

.scrollbar {
  display: flex;
  flex-direction: column;
  align-items: center;
  width: 17px;
  background: #f1f1f1;
}
.arrow { width: 17px; height: 17px; }
.thumb { width: 13px; height: 17px; background: #c1c1c1; }
.down { margin-top: auto; }

.preview {
  display: flex;
  align-items: center;
  height: 71px;
  padding: 0 30px 0 19px;
  border-top: 1px solid #d9d9d9;
}
.store { width: 36px; height: 36px; }
.brand { margin-left: 13px; font-size: 26px; color: #999; }
.skin {
  width: 18px;
  height: 18px;
  margin-left: auto;
  padding: 2px;
  border: 1px solid #d9d9d9;
  border-radius: 50%;
}
.tone { display: block; height: 12px; border-radius: 50%; background: #f7c948; }

.actions {
  display: flex;
  justify-content: flex-end;
  gap: 8px;
  padding: 15px 9px 9px;
}
.action {
  height: 36px;
  padding: 0 8px;
  border-radius: 4px;
  font-size: 14px;
  font-weight: 500;
  color: #4553b0;
}
```
